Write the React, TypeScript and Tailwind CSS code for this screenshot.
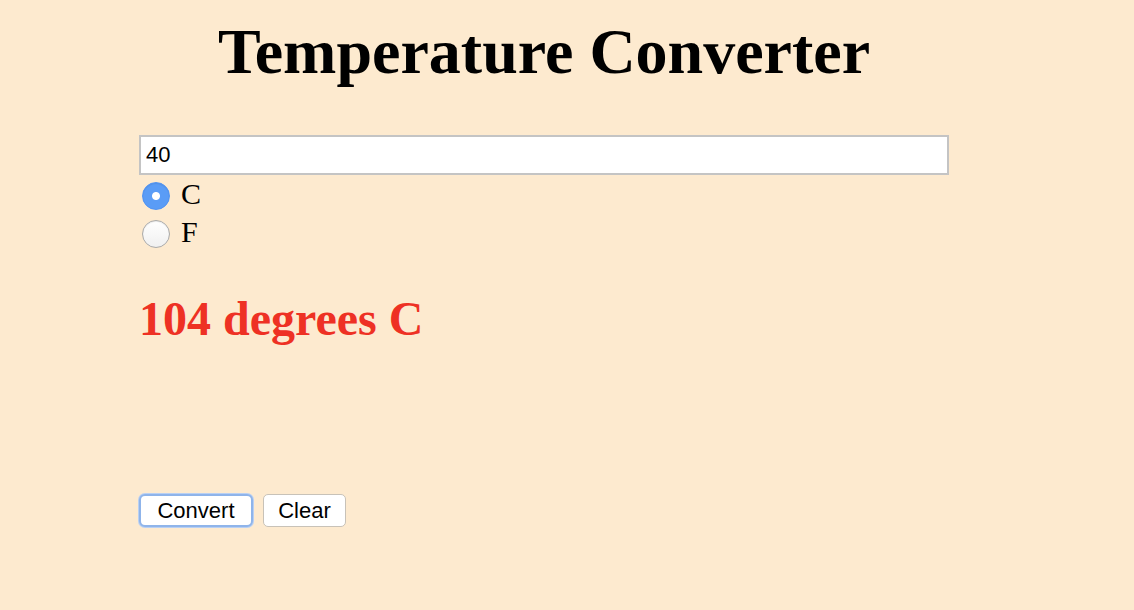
import { useState } from "react";

export default function App() {
  const [value, setValue] = useState("40");
  const [unit, setUnit] = useState<"C" | "F">("C");
  const [result, setResult] = useState("104 degrees C");

  const convert = () => {
    const n = parseFloat(value);
    if (isNaN(n)) {
      setResult("");
      return;
    }
    const out = unit === "C" ? (n * 9) / 5 + 32 : ((n - 32) * 5) / 9;
    setResult(`${Math.round(out * 100) / 100} degrees ${unit}`);
  };

  const clear = () => {
    setValue("");
    setResult("");
  };

  return (
    <div className="min-h-screen bg-[#fdeacf] pt-[20px] font-['Liberation_Serif',serif] text-black">
      <div className="ml-[139px] w-[810px]">
        <h1 className="text-center text-[64px] font-bold leading-none">Temperature Converter</h1>

        <input
          type="text"
          value={value}
          onChange={(e) => setValue(e.target.value)}
          className="mt-[51px] block h-[40px] w-full border-2 border-[#c4c4c4] bg-white px-[5px] font-['Liberation_Sans',sans-serif] text-[22px] outline-none"
        />

        <div className="mt-[2px] flex flex-col">
          {(["C", "F"] as const).map((u) => (
            <label key={u} className="flex h-[38px] cursor-pointer items-center gap-[11px] pl-[3px]">
              <input
                type="radio"
                name="unit"
                checked={unit === u}
                onChange={() => setUnit(u)}
                className="h-[28px] w-[28px] cursor-pointer appearance-none rounded-full border border-[#aaaaaa] bg-[linear-gradient(#ffffff,#f0f0f0)] shadow-[inset_0_1px_1px_rgba(0,0,0,0.08)] checked:border-[#4f92f2] checked:bg-[radial-gradient(circle,#ffffff_3.5px,#5a9cf6_4.5px)]"
              />
              <span className="-mt-[4px] text-[30px] leading-none">{u}</span>
            </label>
          ))}
        </div>

        <p className="mt-[42px] h-[48px] text-[48px] font-bold leading-none text-[#ee3124]">{result}</p>

        <div className="mt-[151px] flex items-center gap-[10px] font-['Liberation_Sans',sans-serif] text-[22px]">
          <button
            type="button"
            onClick={convert}
            className="h-[33px] w-[114px] rounded-[6px] border-2 border-[#8fb4ea] bg-white shadow-[0_0_0_1px_#b9d0f3] leading-none"
          >
            Convert
          </button>
          <button
            type="button"
            onClick={clear}
            className="h-[33px] w-[83px] rounded-[5px] border border-[#c8c2b8] bg-white leading-none"
          >
            Clear
          </button>
        </div>
      </div>
    </div>
  );
}
